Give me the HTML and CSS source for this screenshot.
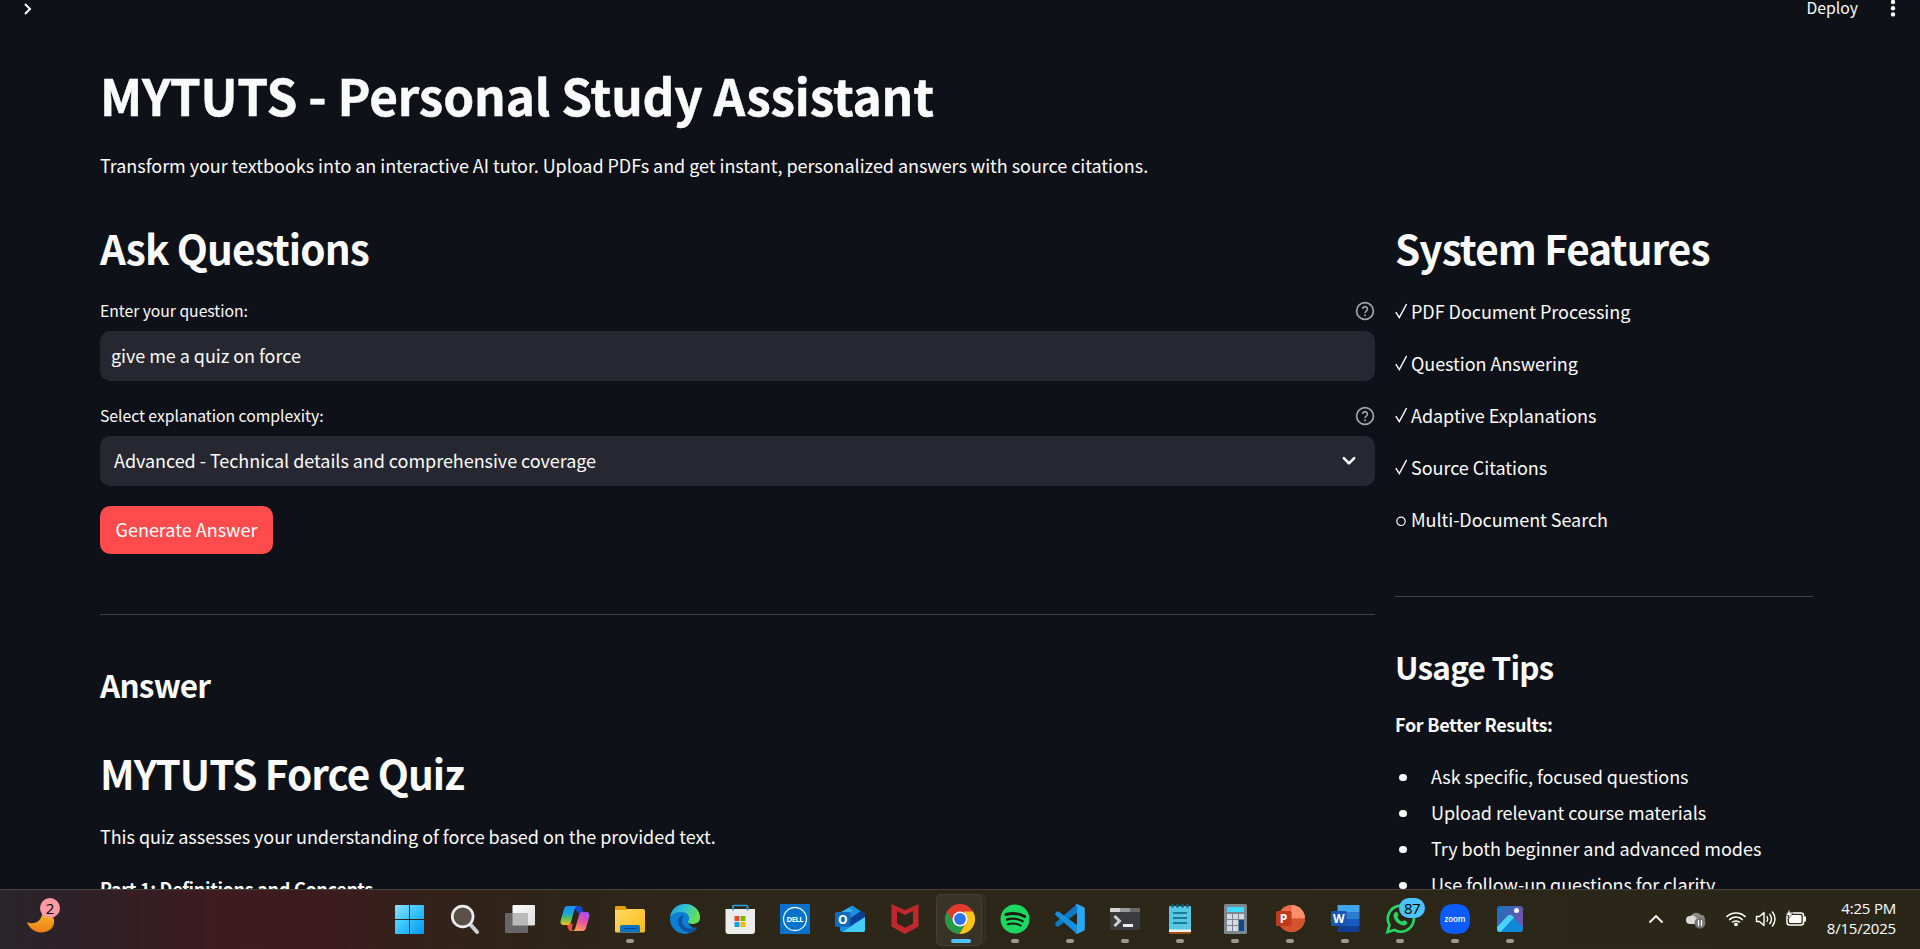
FILE: index.html
```html
<!DOCTYPE html>
<html lang="en">
<head>
<meta charset="utf-8">
<title>MYTUTS - Personal Study Assistant</title>
<link rel="stylesheet" href="styles.css">
</head>
<body>
<div class="app">
  <header class="topbar">
    <svg class="expand" width="10" height="14" viewBox="0 0 10 14"><path d="M2 2l5 5-5 5" fill="none" stroke="#fafafa" stroke-width="2"/></svg>
    <div class="actions">
      <span class="deploy">Deploy</span>
      <svg width="6" height="20" viewBox="0 0 6 20"><g fill="#fafafa"><circle cx="3" cy="4" r="2.2"/><circle cx="3" cy="10.200" r="2.2"/><circle cx="3" cy="16.400" r="2.2"/></g></svg>
    </div>
  </header>
  <main class="page">
    <h1 class="title">MYTUTS - Personal Study Assistant</h1>
    <p class="text intro">Transform your textbooks into an interactive AI tutor. Upload PDFs and get instant, personalized answers with source citations.</p>
    <div class="columns">
      <section class="col-main">
        <h2 class="h2 ask">Ask Questions</h2>
        <div class="label-row"><label class="label l1">Enter your question:</label>
          <svg class="help" width="20" height="20" viewBox="0 0 20 20"><circle cx="10" cy="10" r="8.4" fill="none" stroke="#a3a4a8" stroke-width="1.7"/><path d="M7.6 8.1a2.4 2.4 0 1 1 3.7 2c-.9.6-1.3 1-1.3 1.8" fill="none" stroke="#a3a4a8" stroke-width="1.6"/><circle cx="10" cy="14.2" r="1" fill="#a3a4a8"/></svg></div>
        <div class="field input"><span class="v1">give me a quiz on force</span></div>
        <div class="label-row second"><label class="label l2">Select explanation complexity:</label>
          <svg class="help" width="20" height="20" viewBox="0 0 20 20"><circle cx="10" cy="10" r="8.4" fill="none" stroke="#a3a4a8" stroke-width="1.7"/><path d="M7.6 8.1a2.4 2.4 0 1 1 3.7 2c-.9.6-1.3 1-1.3 1.8" fill="none" stroke="#a3a4a8" stroke-width="1.6"/><circle cx="10" cy="14.2" r="1" fill="#a3a4a8"/></svg></div>
        <div class="field select"><span class="v2">Advanced - Technical details and comprehensive coverage</span>
          <svg width="16" height="12" viewBox="0 0 16 12"><path d="M2.800 3.200L8 8.400l5.200-5.200" fill="none" stroke="#fafafa" stroke-width="2.600" stroke-linecap="round" stroke-linejoin="round"/></svg></div>
        <button class="primary">Generate Answer</button>
        <hr class="rule rule-main">
        <h3 class="h3 answer">Answer</h3>
        <h2 class="h2 quiz">MYTUTS Force Quiz</h2>
        <p class="text quiz-intro">This quiz assesses your understanding of force based on the provided text.</p>
        <p class="text strong part">Part 1: Definitions and Concepts</p>
      </section>
      <aside class="col-side">
        <h2 class="h2 sys">System Features</h2>
        <div class="features">
          <p class="text feature"><svg width="16" height="20" viewBox="0 0 16 20"><path d="M.8 11.2L4.3 16.6 11.6 3" fill="none" stroke="#fafafa" stroke-width="1.5"/></svg>PDF Document Processing</p>
          <p class="text feature"><svg width="16" height="20" viewBox="0 0 16 20"><path d="M.8 11.2L4.3 16.6 11.6 3" fill="none" stroke="#fafafa" stroke-width="1.5"/></svg>Question Answering</p>
          <p class="text feature"><svg width="16" height="20" viewBox="0 0 16 20"><path d="M.8 11.2L4.3 16.6 11.6 3" fill="none" stroke="#fafafa" stroke-width="1.5"/></svg>Adaptive Explanations</p>
          <p class="text feature"><svg width="16" height="20" viewBox="0 0 16 20"><path d="M.8 11.2L4.3 16.6 11.6 3" fill="none" stroke="#fafafa" stroke-width="1.5"/></svg>Source Citations</p>
          <p class="text feature"><svg width="16" height="20" viewBox="0 0 16 20"><circle cx="6" cy="12.300" r="4.200" fill="none" stroke="#fafafa" stroke-width="1.2"/></svg>Multi-Document Search</p>
        </div>
        <hr class="rule rule-side">
        <h3 class="h3 tips">Usage Tips</h3>
        <p class="text strong better">For Better Results:</p>
        <ul class="list">
          <li class="text item">Ask specific, focused questions</li>
          <li class="text item">Upload relevant course materials</li>
          <li class="text item">Try both beginner and advanced modes</li>
          <li class="text item">Use follow-up questions for clarity</li>
        </ul>
      </aside>
    </div>
  </main>
</div>
<footer class="taskbar">
  <div class="weather">
    <svg width="32" height="32" viewBox="0 0 32 32"><defs><linearGradient id="moon" x1="0" y1="0" x2="0" y2="1"><stop offset="0" stop-color="#f6c02c"/><stop offset="1" stop-color="#f07c18"/></linearGradient></defs><path d="M1 18c4 2 9 1.500 12-1.500C16 13.500 17 9 16 5c8 1 13 8 12 14-1 6-6 9.500-13 9.500C8 28 3 24 1 18z" fill="url(#moon)"/></svg>
    <span class="badge pink">2</span>
  </div>
  <nav class="dock">
    <div class="slot"><svg viewBox="0 0 32 32"><defs><linearGradient id="win" x1="0" y1="0" x2="1" y2="1"><stop offset="0" stop-color="#8be0ff"/><stop offset=".5" stop-color="#35c3fb"/><stop offset="1" stop-color="#0894f7"/></linearGradient></defs><path fill="url(#win)" d="M1 3a1 1 0 0 1 1-1h13v14H1zM16 2h13a1 1 0 0 1 1 1v13H16zM1 17h14v14H2a1 1 0 0 1-1-1zM16 17h14v13a1 1 0 0 1-1 1H16z"/></svg></div>
    <div class="slot"><svg viewBox="0 0 32 32"><path d="M21 21l7 8" stroke="#cfcfd6" stroke-width="4" stroke-linecap="round"/><circle cx="13.700" cy="13.500" r="10.400" fill="#5a5048" stroke="#ecebed" stroke-width="2.700"/></svg></div>
    <div class="slot"><svg viewBox="0 0 32 32"><defs><linearGradient id="tv" x1="0" y1="0" x2="1" y2="1"><stop offset="0" stop-color="#fff"/><stop offset="1" stop-color="#dcdcdc"/></linearGradient></defs><rect x="8.500" y="2" width="22.500" height="20.500" rx="1.200" fill="url(#tv)"/><rect x="1" y="10" width="23" height="20" rx="1.200" fill="#66656a"/><path d="M8.500 10H23a1 1 0 0 1 1 1v11.500H8.500z" fill="#b9b9b9"/></svg></div>
    <div class="slot"><svg viewBox="0 0 32 32"><defs><linearGradient id="cpa" x1="0" y1="0" x2="0" y2="1"><stop offset="0" stop-color="#1c8df0"/><stop offset=".4" stop-color="#18a6d8"/><stop offset=".7" stop-color="#6cc04a"/><stop offset="1" stop-color="#f2c21a"/></linearGradient><linearGradient id="cpb" x1=".7" y1="0" x2=".3" y2="1"><stop offset="0" stop-color="#a94df0"/><stop offset=".5" stop-color="#e8569c"/><stop offset="1" stop-color="#ffa04e"/></linearGradient></defs><path d="M14 3h6.500c2 0 2.600 1.300 3.300 4L25 10h-6z" fill="#1747c8"/><path d="M8 21h6l-1 3c-.5 2 0 3 1 4h-2c-2 0-2.800-2-3.300-4z" fill="#f0503a"/><path d="M8.500 3H19c-2 0-3 1.500-3.700 4L12 19c-.6 2-1.600 3-3.500 3H5c-3 0-4-2-3.200-5L5 6c.6-2 1.500-3 3.500-3z" fill="url(#cpa)"/><path d="M23.500 28H13c2 0 3-1.500 3.700-4L20 12c.6-2 1.600-3 3.500-3H27c3 0 4 2 3.200 5L27 25c-.6 2-1.500 3-3.500 3z" fill="url(#cpb)"/></svg></div>
    <div class="slot"><svg viewBox="0 0 32 32"><defs><linearGradient id="fold" x1="0" y1="0" x2="1" y2="1"><stop offset="0" stop-color="#ffdb69"/><stop offset="1" stop-color="#fbb912"/></linearGradient></defs><path d="M1 4a1 1 0 0 1 1-1h9l2 3v4H1z" fill="#e3a008"/><path d="M1 7h10l2-1h16a2 2 0 0 1 2 2v20a1.500 1.500 0 0 1-1.500 1.500h-27A1.500 1.500 0 0 1 1 28z" fill="url(#fold)"/><path d="M6 29.500V24a2 2 0 0 1 2-2h16a2 2 0 0 1 2 2v5.500z" fill="#0e73c4"/><path d="M9.500 25.500h13" stroke="#074b8e"/></svg><i class="dot"></i></div>
    <div class="slot"><svg viewBox="0 0 32 32"><defs><linearGradient id="e1" x1="0" y1="0" x2="1" y2=".4"><stop offset="0" stop-color="#1f9be0"/><stop offset=".5" stop-color="#33c3d3"/><stop offset="1" stop-color="#66df50"/></linearGradient></defs><circle cx="16" cy="16" r="15" fill="#0b7fd4"/><path d="M1.200 13.500C2.500 6 8.500 1 16 1c9 0 15 6.500 15 13 0 5-3.500 7-7.500 7-3 0-4.500-1-4.500-2s1.200-1.700 1.200-4c0-3-3-6-8-6-4.500 0-8.500 1.800-11 4.500z" fill="url(#e1)"/><path d="M13 12.500c-3 1-4.700 5-3.200 9 1.800 5 7.200 8.500 12.700 8.200 2.500-1.200 5-3.500 6.300-6-5.800 3.300-13 2.300-15.300-3-1-2.700-1-5.700 1.500-7.700z" fill="#10509f"/><path d="M19 18.500c0 1.800 3 3 6 2.500 2.500-.4 4.800-1.800 6.500-4v6l-2.700 1.200c-4 1.800-8.300-.2-9.800-5.700z" fill="#2b2718"/></svg></div>
    <div class="slot"><svg viewBox="0 0 32 32"><path d="M1.500 6H31v22a3 3 0 0 1-3 3H4.500a3 3 0 0 1-3-3z" fill="#ececec"/><path d="M9 7.500V3.500a1 1 0 0 1 1-1h12.500a1 1 0 0 1 1 1v4" fill="none" stroke="#22a5e8" stroke-width="1.700"/><path fill="#e64a26" d="M10.500 13h5v5h-5z"/><path fill="#7db800" d="M16.500 13h5v5h-5z"/><path fill="#0aa0e8" d="M10.500 19h5v5h-5z"/><path fill="#f8b608" d="M16.500 19h5v5h-5z"/></svg></div>
    <div class="slot"><svg viewBox="0 0 32 32"><path fill="#0672cb" d="M1 1h30v30H1z"/><circle cx="16" cy="16" r="11.500" fill="none" stroke="#e8f3fc" stroke-width="1.300"/><text x="7.500" y="18.700" class="dell" textLength="17">DELL</text></svg></div>
    <div class="slot"><svg viewBox="0 0 32 32"><path d="M6 10L17 3q1-.6 2 0l12 8v16a2 2 0 0 1-2 2H9a3 3 0 0 1-3-3z" fill="#1a8fe0"/><path d="M15 5l4 2.500L7 15V9z" fill="#35b4f2"/><path d="M27 8l4 3v4L16 24l-7-4z" fill="#0b3f96"/><path d="M31 14v13a2 2 0 0 1-2 2H9l11-8z" fill="#43cdf5"/><rect x="1" y="9" width="15.500" height="15" rx="1.500" fill="#0f6cbd"/><text x="8.700" y="21" text-anchor="middle" class="letter">O</text></svg></div>
    <div class="slot"><svg viewBox="0 0 32 32"><path d="M2.500 1L16 7.300 29.500 1v22.500L16 31 2.500 23.500zM8 8v12.500l8 4.200 8-4.200V8l-8 4z" fill="#c1272d" fill-rule="evenodd"/></svg></div>
    <div class="slot active"><i class="stack"></i><svg viewBox="0 0 32 32"><circle cx="16" cy="16" r="15" fill="#e33b2e"/><path d="M3 8.500A15 15 0 0 0 15.500 31l6.500-11.500L9.500 19z" fill="#249a48"/><path d="M29 8.500A15 15 0 0 1 15.500 31L22.500 19 20 8.500z" fill="#fcc31c"/><circle cx="16" cy="16" r="7.500" fill="#fff"/><circle cx="16" cy="16" r="5.900" fill="#2f73ea"/></svg><i class="dot wide"></i></div>
    <div class="slot"><svg viewBox="0 0 32 32"><circle cx="16" cy="16" r="14.500" fill="#1ed760"/><g fill="none" stroke="#1b1c12" stroke-linecap="round"><path d="M7 11.500c6.500-1.800 13-1.200 18.700 2" stroke-width="2.900"/><path d="M8 16.500c5.500-1.500 11-1 15.700 1.700" stroke-width="2.400"/><path d="M8.800 21.200c4.600-1.200 9-.8 13 1.400" stroke-width="2"/></g></svg><i class="dot"></i></div>
    <div class="slot"><svg viewBox="0 0 32 32"><path d="M1.500 19.500L23 1v9L4.500 23.500q-1 .5-1.800-.3l-1.200-1.500q-.6-1.200 0-2.200z" fill="#0f78c4"/><path d="M1.500 12L23 31v-9L4.500 8.500q-1-.5-1.800.3L1.500 10q-.6 1 0 2z" fill="#178fdc"/><path d="M23 1l6.500 3q1.300.6 1.300 2v20q0 1.400-1.300 2L23 31q-1 0-1.500-.8L23 29V3l-1.500-1.200Q22 1 23 1z" fill="#2aa7f2"/></svg><i class="dot"></i></div>
    <div class="slot"><svg viewBox="0 0 32 32"><path d="M1 6q0-1 1-1h28q1 0 1 1v20q0 1-1 1H2q-1 0-1-1z" fill="#3b3b3d"/><path d="M1 9V6q0-1 1-1h9v4z" fill="#d5d5d5"/><path d="M11 5h10v4H11z" fill="#9a9a9a"/><path d="M21 5h9q1 0 1 1v3H21z" fill="#696969"/><path d="M5.500 13l5 5-5 5" fill="none" stroke="#cfcfcf" stroke-width="3"/><path d="M14 21h10v3H14z" fill="#eee"/></svg><i class="dot"></i></div>
    <div class="slot"><svg viewBox="0 0 32 32"><path d="M5 27h22v2.500a1.500 1.500 0 0 1-1.500 1.500h-19A1.500 1.500 0 0 1 5 29.500z" fill="#a04c12"/><path d="M5 4q0-1 1-1h20q1 0 1 1v23H5z" fill="#57c8e4"/><path d="M5 26.500h22V29H5z" fill="#f2f2f2"/><path d="M9 10h14M9 15h14M9 20h14" stroke="#0a6180" stroke-width="1.700"/><path d="M8.500 1v3.500m5-3.500v3.500m5-3.500v3.500m5-3.500v3.500" stroke="#0c5e78" stroke-width="2.500"/></svg><i class="dot"></i></div>
    <div class="slot"><svg viewBox="0 0 32 32"><rect x="5" y="1" width="23" height="30" rx="1.500" fill="#7d8790"/><path d="M8 4h17v5H8z" fill="#3fdcfb"/><path d="M8 11h5v5H8zm6 0h5v5h-5zm6 0h5v5h-5zM8 17h5v5H8zm6 0h5v5h-5zM8 23h5v5H8zm6 0h5v5h-5z" fill="#d5dae0"/><path d="M20 17h5v11h-5z" fill="#0c4b8c"/></svg><i class="dot"></i></div>
    <div class="slot"><svg viewBox="0 0 32 32"><circle cx="17.500" cy="15.500" r="13.500" fill="#ed6c47"/><path d="M17.500 2A13.500 13.500 0 0 1 31 15.500H17.500z" fill="#ff8f6b"/><path d="M31 15.500a13.500 13.500 0 0 1-27 0z" fill="#d35230"/><rect x="2" y="8" width="15.500" height="15" rx="1.500" fill="#c13b1b"/><text x="9.500" y="19.500" text-anchor="middle" class="letter">P</text></svg><i class="dot"></i></div>
    <div class="slot"><svg viewBox="0 0 32 32"><path d="M8.500 2h22v7h-22z" fill="#41a5ee"/><path d="M8.500 9h22v7h-22z" fill="#2b7cd3"/><path d="M8.500 16h22v7h-22z" fill="#185abd"/><path d="M8.500 23h22v6h-22z" fill="#103f91"/><rect x="2" y="8" width="15.500" height="15" rx="1.500" fill="#1a57b5"/><text x="9.700" y="19.500" text-anchor="middle" class="letter">W</text></svg><i class="dot"></i></div>
    <div class="slot"><svg viewBox="0 0 32 32"><path d="M3.500 29l2-7A13 13 0 1 1 10.500 27z" fill="none" stroke="#25d366" stroke-width="2.700"/><path d="M11 9.500c1-1.200 2-.9 2.500.2l1 2.300c.2.700-1.200 1.800-1 2.300 1 2 2.300 3.300 4.500 4.300.6.200 1.500-1.700 2.200-1.400l2.600 1.300c.8.400.6 1.500 0 2.400-1.500 2.200-4.800 1.800-7.600.2-3-1.800-5.700-5.300-5.700-8.300 0-1.300.6-2.500 1.500-3.300z" fill="#25d366"/></svg><span class="badge blue">87</span><i class="dot"></i></div>
    <div class="slot"><svg viewBox="0 0 32 32"><path d="M16 1c10.500 0 15 4 15 15s-4.500 15-15 15S1 27 1 16 5.500 1 16 1z" fill="#0b5cff"/><text x="5.500" y="18.500" class="zoom" textLength="21">zoom</text></svg><i class="dot"></i></div>
    <div class="slot"><svg viewBox="0 0 32 32"><defs><linearGradient id="ph" x1="0" y1="0" x2="1" y2=".6"><stop offset="0" stop-color="#1273c4"/><stop offset="1" stop-color="#7a52a8"/></linearGradient></defs><rect x="3" y="3" width="26" height="26" rx="3" fill="url(#ph)"/><path d="M3 24L14 12.500q2-1.500 4 0L29 24v2a3 3 0 0 1-3 3H6a3 3 0 0 1-3-3z" fill="#1187d8"/><path d="M3 24L14 12.500q2-1.500 4 0l2 2L6.500 29H6a3 3 0 0 1-3-3z" fill="#4bd3f7"/><circle cx="22.500" cy="7.500" r="2.500" fill="#f4f0ff"/></svg><i class="dot"></i></div>
  </nav>
  <div class="tray">
    <svg class="t-up" width="16" height="10" viewBox="0 0 16 10"><path d="M1.500 8.500L8 2l6.500 6.500" fill="none" stroke="#fff" stroke-width="1.800"/></svg>
    <svg class="t-cloud" width="22" height="20" viewBox="0 0 22 20"><path d="M6 6a6 6 0 0 1 10-1c3 0 4 2 4 5H8z" fill="#8b8a86"/><path d="M5 14a4 4 0 0 1 0-8c2-1 5-.5 6 2l4 1v5z" fill="#dcdbd8"/><circle cx="15" cy="13" r="5.500" fill="#77777a"/><path d="M13.500 10v6m3-6v6" stroke="#fff" stroke-width="1.200"/></svg>
    <svg class="t-wifi" width="22" height="17" viewBox="0 0 22 17"><g fill="none" stroke="#fff" stroke-width="1.500"><path d="M1.300 7a13.500 13.500 0 0 1 19.400 0"/><path d="M4.200 9.900a9.500 9.500 0 0 1 13.600 0"/><path d="M7 12.600a5.600 5.600 0 0 1 8 0"/></g><circle cx="11" cy="14.300" r="1.900" fill="#fff"/></svg>
    <svg class="t-vol" width="22" height="18" viewBox="0 0 22 18"><g fill="none" stroke="#fff" stroke-width="1.400" stroke-linejoin="round" stroke-linecap="round"><path d="M1.500 6.500h3L9 2.500v13l-4.500-4h-3z"/><path d="M12 6.500q1.500 2.500 0 5"/><path d="M14.800 4.300q3.300 4.700 0 9.400"/><path d="M17.500 2q5 7 0 14"/></g></svg>
    <svg class="t-bat" width="22" height="20" viewBox="0 0 22 20"><rect x="2" y="5" width="16.500" height="12" rx="2.500" fill="none" stroke="#fff" stroke-width="1.500"/><rect x="4" y="7" width="12.500" height="8" rx="1" fill="#fff"/><path d="M19 8.500h2v5h-2z" fill="#fff"/><path d="M4.500 1L1 7.500h3L3 12l5-7H5z" fill="#fff" stroke="#2b2718" stroke-width=".6"/></svg>
    <div class="clock"><span class="time">4:25 PM</span><span class="date">8/15/2025</span></div>
  </div>
</footer>
</body>
</html>
```

FILE: styles.css
```css
* { box-sizing: border-box; }
body {
  margin: 0;
  width: 1920px;
  height: 949px;
  overflow: hidden;
  display: flex;
  flex-direction: column;
  background: #0e1117;
  color: #fafafa;
  font-family: "Noto Sans CJK SC", "Open Sans", sans-serif;
}
h1, h2, h3, p, ul { margin: 0; padding: 0; font-weight: inherit; white-space: nowrap; }

.app { height: 889px; overflow: hidden; }
.topbar {
  height: 65px;
  display: flex;
  justify-content: space-between;
  align-items: flex-start;
  padding: 0 24px 0 23px;
}
.expand { margin-top: 2px; }
.actions { display: flex; align-items: flex-start; gap: 32px; }
.actions svg { margin-top: -2px; }
.deploy { font-size: 15.75px; line-height: 16px; margin-top: 0; }

.page { padding: 0 107px 0 100px; }
.title { font-size: 49.5px; font-weight: 700; line-height: 60px; letter-spacing: -0.15px; -webkit-text-stroke: 0.5px #fafafa; }
.text { font-size: 18px; line-height: 32px; letter-spacing: -0.045px; }
.intro { margin-top: 24px; }
.columns { display: flex; gap: 20px; margin-top: 40px; }
.col-main { width: 1275px; }
.col-side { width: 418px; }
.h2 { font-size: 40.5px; font-weight: 600; line-height: 54px; letter-spacing: -0.92px; }
.h3 { font-size: 31.5px; font-weight: 600; line-height: 42px; letter-spacing: -0.78px; }
.strong { font-weight: 700; letter-spacing: -0.3px; }

.label-row { display: flex; justify-content: space-between; align-items: center; height: 24px; margin-top: 24px; }
.label-row.second { margin-top: 23px; }
.label { font-size: 15.75px; line-height: 24px; letter-spacing: -0.04px; }
.field {
  height: 50px;
  margin-top: 8px;
  padding: 0 18px 0 14px;
  border-radius: 10px;
  background: #262730;
  display: flex;
  align-items: center;
  justify-content: space-between;
  font-size: 18px;
  line-height: 32px;
  letter-spacing: -0.045px;
}
.field span { padding-bottom: 2px; }
.field.input { padding-left: 11px; }
.primary {
  display: block;
  width: 173px;
  height: 48px;
  margin-top: 20px;
  padding: 0 0 2px;
  border: 0;
  border-radius: 10px;
  background: #ff4b4b;
  color: #fff;
  font: 400 18px/32px "Noto Sans CJK SC", sans-serif;
}
.rule { height: 1px; margin: 0; border: 0; background: #3f4146; }
.rule-main { margin-top: 60px; }
.answer { margin-top: 48px; }
.quiz { margin-top: 41px; }
.quiz-intro { margin-top: 20px; }
.part { margin-top: 20px; }

.features { display: flex; flex-direction: column; gap: 20px; margin-top: 20px; }
.feature { display: flex; align-items: center; }
.rule-side { margin-top: 61px; }
.tips { margin-top: 48px; }
.better { margin-top: 21px; }
.list { list-style: none; margin-top: 18px; }
.item { display: flex; align-items: center; line-height: 36px; }
.item::before { content: ""; flex: none; width: 7.5px; height: 7.5px; margin: 3px 24.5px 0 4px; border-radius: 50%; background: #fafafa; }

.taskbar {
  height: 60px;
  display: flex;
  border-top: 1px solid #4a453c;
  background: linear-gradient(90deg, #29252b 0, #2e2127 80px, #3e1b21 220px, #3c1c1f 330px, #33221a 440px, #2e2519 570px, #2c2718 760px, #2b2718 1920px);
}
.weather { position: relative; width: 383px; padding: 14px 0 0 26px; }
.badge {
  position: absolute;
  height: 20px;
  border-radius: 10px;
  color: #000;
  font: 400 15px/20px "Open Sans", sans-serif;
  text-align: center;
}
.pink { left: 40px; top: 8px; width: 20px; background: #ff99a4; }
.blue { left: 26px; top: 8px; width: 26px; background: #4cc2ff; letter-spacing: -0.5px; }
.dock { display: flex; }
.slot { position: relative; width: 55px; height: 59px; padding: 13px 0 0 11px; }
.slot svg { position: relative; display: block; width: 32px; height: 32px; }
.dot { position: absolute; left: 23px; bottom: 6px; width: 8px; height: 4px; border-radius: 2px; background: #9c998f; }
.dot.wide { left: 18px; width: 20px; background: #4cc2ff; }
.active { z-index: 0; }
.active::before, .stack { content: ""; position: absolute; top: 4px; height: 50px; border-radius: 5px; border: 1px solid #434030; background: #373427; }
.active::before { left: 3px; width: 44px; z-index: 0; }
.stack { left: 5px; width: 48px; z-index: -1; background: #302d20; border-color: #39362a; }
.letter { font: 700 12px "Open Sans", sans-serif; fill: #fff; }
.dell { font: 700 7.5px "Open Sans", sans-serif; fill: #fff; }
.zoom { font: 600 8px "Open Sans", sans-serif; fill: #fff; }

.tray { flex: 1; display: flex; align-items: flex-start; padding: 0 24px 0 110px; }
.tray svg { flex: none; }
.t-up { margin: 24px 0 0 0; }
.t-cloud { margin: 20px 0 0 21px; }
.t-wifi { margin: 20px 0 0 18px; }
.t-vol { margin: 20px 0 0 8px; }
.t-bat { margin: 18px 0 0 8px; }
.clock { margin-left: auto; margin-top: 8px; display: flex; flex-direction: column; align-items: flex-end; font: 400 15px/20px "Open Sans", sans-serif; letter-spacing: -0.2px; color: #fff; }
```
